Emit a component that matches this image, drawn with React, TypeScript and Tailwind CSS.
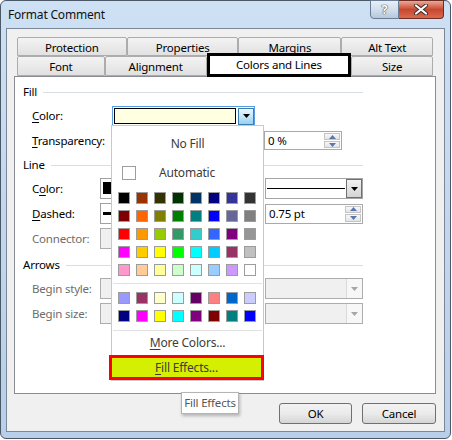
import React from "react";

const standardColors: string[][] = [
  ["#000000", "#993300", "#333300", "#003300", "#003366", "#000080", "#333399", "#333333"],
  ["#800000", "#FF6600", "#808000", "#008000", "#008080", "#0000FF", "#666699", "#808080"],
  ["#FF0000", "#FF9900", "#99CC00", "#339966", "#33CCCC", "#3366FF", "#800080", "#969696"],
  ["#FF00FF", "#FFCC00", "#FFFF00", "#00FF00", "#00FFFF", "#00CCFF", "#993366", "#C0C0C0"],
  ["#FF99CC", "#FFCC99", "#FFFF99", "#CCFFCC", "#CCFFFF", "#99CCFF", "#CC99FF", "#FFFFFF"],
];

const chartColors: string[][] = [
  ["#9999FF", "#993366", "#FFFFCC", "#CCFFFF", "#660066", "#FF8080", "#0066CC", "#CCCCFF"],
  ["#000080", "#FF00FF", "#FFFF00", "#00FFFF", "#800080", "#800000", "#008080", "#0000FF"],
];

function Swatch({ color }: { color: string }) {
  return <div className="h-[12px] w-[12px] border border-[#9c9c9c]" style={{ backgroundColor: color }} />;
}

function SwatchGrid({ rows }: { rows: string[][] }) {
  return (
    <div className="flex flex-col gap-[6px] pl-[6px]">
      {rows.map((row, i) => (
        <div key={i} className="flex gap-[6px]">
          {row.map((c, j) => (
            <Swatch key={j} color={c} />
          ))}
        </div>
      ))}
    </div>
  );
}

function DownArrow({ color = "#000000" }: { color?: string }) {
  return (
    <svg width="7" height="4" viewBox="0 0 7 4">
      <path d="M0 0H7L3.5 4Z" fill={color} />
    </svg>
  );
}

function Spinner() {
  return (
    <div className="flex w-[17px] flex-col gap-[1px] py-[1px] pr-[1px]">
      <div className="flex flex-1 items-center justify-center border border-[#c4c4c4] bg-gradient-to-b from-[#f8f8f8] to-[#e4e4e4]">
        <svg width="7" height="4" viewBox="0 0 7 4">
          <path d="M0 4H7L3.5 0Z" fill="#5b76ad" />
        </svg>
      </div>
      <div className="flex flex-1 items-center justify-center border border-[#c4c4c4] bg-gradient-to-b from-[#f8f8f8] to-[#e4e4e4]">
        <svg width="7" height="4" viewBox="0 0 7 4">
          <path d="M0 0H7L3.5 4Z" fill="#5b76ad" />
        </svg>
      </div>
    </div>
  );
}

function Heading({ label }: { label: string }) {
  return (
    <div className="flex h-[16px] w-[340px] items-center">
      <span className="leading-none">{label}</span>
      <div className="ml-[6px] h-px flex-1 bg-[#d5dfe5]" />
    </div>
  );
}

function BackTab({ label, className }: { label: string; className: string }) {
  return (
    <div
      className={
        "flex h-full items-center justify-center rounded-t-[2px] border border-[#acacac] bg-gradient-to-b from-[#f3f3f3] to-[#e1e1e1] pt-[2px] leading-none " +
        className
      }
    >
      {label}
    </div>
  );
}

function DisabledCombo() {
  return (
    <div className="flex h-[21px] w-[98px] border border-[#adadad] bg-[#f0f0f0]">
      <div className="flex-1" />
      <div className="flex w-[16px] items-center justify-center border-l border-[#d9d9d9] bg-[#f7f7f7]">
        <DownArrow color="#a6a6a6" />
      </div>
    </div>
  );
}

export default function App() {
  return (
    <div className="h-[440px] w-[452px] overflow-hidden whitespace-nowrap bg-white font-['Segoe_UI','Noto_Sans',sans-serif] text-[11.5px] tracking-[-0.2px] text-black">
      <div className="flex h-[439px] w-[451px] flex-col rounded-[6px] border border-[#4a5868] bg-gradient-to-b from-[#cde0f4] via-[#c2d7ef] to-[#b7cfe9]">
        {/* title bar */}
        <div className="flex h-[27px] items-start justify-between pl-[7px] pr-[6px]">
          <div className="self-center pt-[1px] text-[12px] leading-none text-[#111]">Format Comment</div>
          <div className="-mt-px flex">
            <div className="flex h-[19px] w-[29px] items-center justify-center rounded-bl-[4px] border border-[#6b7d94] bg-gradient-to-b from-[#e8eff7] via-[#d2deec] to-[#b7c8dc] text-[13px] font-bold leading-none text-white [text-shadow:0_0_1px_#222,0_0_1px_#222]">
              ?
            </div>
            <div className="flex h-[19px] w-[45px] items-center justify-center rounded-br-[4px] border border-l-0 border-[#6e2d24] bg-gradient-to-b from-[#e9a996] via-[#c84630] to-[#d96a4e]">
              <svg width="16" height="11" viewBox="0 0 16 11">
                <path d="M3 1.5L13 9.5M13 1.5L3 9.5" stroke="#3a2a28" strokeWidth="4" strokeLinecap="round" />
                <path d="M3 1.5L13 9.5M13 1.5L3 9.5" stroke="#ffffff" strokeWidth="2.2" strokeLinecap="round" />
              </svg>
            </div>
          </div>
        </div>

        {/* client area */}
        <div className="mx-[5px] mb-[6px] flex flex-1 flex-col border border-[#7b8794] bg-[#f0f0f0] pl-[7px] pr-[8px] pt-[8px]">
          {/* tab rows */}
          <div className="flex flex-col px-[3px]">
            <div className="flex h-[19px]">
              <BackTab label="Protection" className="w-[110px]" />
              <BackTab label="Properties" className="w-[112px]" />
              <BackTab label="Margins" className="w-[103px]" />
              <BackTab label="Alt Text" className="w-[92px]" />
            </div>
            <div className="flex h-[20px] items-start">
              <BackTab label="Font" className="w-[88px]" />
              <BackTab label="Alignment" className="w-[102px]" />
              <div className="relative z-10 -mt-[3px] flex h-[24px] w-[145px] items-center justify-center border-[3px] border-black bg-white pb-[1px] leading-none">
                Colors and Lines
              </div>
              <BackTab label="Size" className="w-[82px]" />
            </div>
          </div>

          {/* tab page */}
          <div className="relative h-[318px] border border-[#898c95] bg-white pl-[8px] pt-[7px]">
            <Heading label="Fill" />
            <div className="mt-[5px] flex h-[21px] items-center pl-[9px]">
              <div className="w-[80px]">
                <span className="underline underline-offset-[2px]">C</span>olor:
              </div>
              <div className="flex h-[20px] w-[143px] border border-[#569de5] bg-white p-[1px] pr-0">
                <div className="flex-1 border border-black bg-[#ffffe1]" />
                <div className="-mb-px ml-[2px] flex w-[16px] items-center justify-center border border-[#3c7fb1] bg-gradient-to-b from-[#eaf6fd] via-[#c4e5f8] to-[#98d0f1]">
                  <DownArrow />
                </div>
              </div>
            </div>
            <div className="mt-[4px] flex h-[21px] items-center pl-[9px]">
              <div className="w-[232px]">
                <span className="underline underline-offset-[2px]">T</span>ransparency:
              </div>
              <div className="flex h-[19px] w-[78px] border border-[#a9a9a9] bg-white">
                <div className="flex flex-1 items-center pl-[3px] leading-none">0 %</div>
                <Spinner />
              </div>
            </div>

            <div className="mt-[6px]">
              <Heading label="Line" />
            </div>
            <div className="mt-[5px] flex h-[21px] items-center pl-[9px]">
              <div className="w-[68px]">
                C<span className="underline underline-offset-[2px]">o</span>lor:
              </div>
              <div className="w-[165px]">
                <div className="h-[21px] w-[60px] border border-[#a0a0a0] bg-white px-[2px] pb-[4px] pt-[3px]">
                  <div className="h-full w-[40px] bg-black" />
                </div>
              </div>
              <div className="flex h-[21px] w-[98px] border border-[#a5a5a5] bg-white">
                <div className="flex flex-1 items-center px-[1px]">
                  <div className="h-px w-full bg-black" />
                </div>
                <div className="flex w-[16px] items-center justify-center border border-[#707070] bg-gradient-to-b from-[#f2f2f2] to-[#d4d4d4]">
                  <DownArrow />
                </div>
              </div>
            </div>
            <div className="mt-[4px] flex h-[21px] items-center pl-[9px]">
              <div className="w-[68px]">
                <span className="underline underline-offset-[2px]">D</span>ashed:
              </div>
              <div className="w-[165px]">
                <div className="flex h-[21px] w-[60px] items-center border border-[#a0a0a0] bg-white px-[2px]">
                  <div className="h-[3px] w-[40px] bg-black" />
                </div>
              </div>
              <div className="flex h-[20px] w-[98px] border border-[#a9a9a9] bg-white">
                <div className="flex flex-1 items-center pl-[3px] leading-none">0.75 pt</div>
                <Spinner />
              </div>
            </div>
            <div className="mt-[4px] flex h-[21px] items-center pl-[9px]">
              <div className="w-[68px] text-[#6d6d6d]">Connector:</div>
              <div className="h-[21px] w-[60px] border border-[#adadad] bg-[#f0f0f0]" />
            </div>

            <div className="mt-[8px]">
              <Heading label="Arrows" />
            </div>
            <div className="mt-[5px] flex h-[21px] items-center pl-[9px]">
              <div className="w-[68px] text-[#6d6d6d]">Begin style:</div>
              <div className="w-[165px]">
                <div className="h-[21px] w-[60px] border border-[#adadad] bg-[#f0f0f0]" />
              </div>
              <DisabledCombo />
            </div>
            <div className="mt-[4px] flex h-[21px] items-center pl-[9px]">
              <div className="w-[68px] text-[#6d6d6d]">Begin size:</div>
              <div className="w-[165px]">
                <div className="h-[21px] w-[60px] border border-[#adadad] bg-[#f0f0f0]" />
              </div>
              <DisabledCombo />
            </div>

            {/* colour picker drop-down */}
            <div className="absolute left-[96px] top-[48px] z-10 flex h-[256px] w-[153px] flex-col border border-[#c9c9c9] bg-white text-[#3c3c3c]">
              <div className="flex h-[36px] items-center justify-center text-[12px] leading-none">No Fill</div>
              <div className="flex h-[23px] items-center pl-[10px]">
                <div className="h-[14px] w-[14px] border border-[#9c9c9c] bg-white" />
                <span className="ml-[23px] text-[12px] leading-none">Automatic</span>
              </div>
              <div className="mt-[8px]">
                <SwatchGrid rows={standardColors} />
              </div>
              <div className="mx-[1px] mt-[7px] h-px bg-[#e2e2e2]" />
              <div className="mt-[8px]">
                <SwatchGrid rows={chartColors} />
              </div>
              <div className="mx-[1px] mt-[8px] h-px bg-[#e2e2e2]" />
              <div className="flex h-[24px] items-center justify-center text-[12px] leading-none">
                <span className="underline underline-offset-[2px]">M</span>ore Colors...
              </div>
              <div className="-ml-[3px] -mr-px flex h-[25px] items-center justify-center border-[3px] border-[#ff0000] bg-[#d4ef00] text-[12px] leading-none">
                <span className="underline underline-offset-[2px]">F</span>ill Effects...
              </div>
            </div>

            {/* tooltip */}
            <div className="absolute left-[166px] top-[315px] z-20 flex h-[22px] w-[58px] items-center justify-center border border-[#b4b4b4] bg-white leading-none text-[#575757] shadow-[1px_2px_3px_rgba(0,0,0,0.25)]">
              Fill Effects
            </div>
          </div>

          {/* dialog buttons */}
          <div className="mt-[9px] flex justify-end gap-[10px]">
            <div className="flex h-[21px] w-[73px] items-center justify-center rounded-[3px] border border-[#707070] bg-gradient-to-b from-[#f2f2f2] via-[#ebebeb] to-[#d5d5d5] leading-none">
              OK
            </div>
            <div className="flex h-[21px] w-[74px] items-center justify-center rounded-[3px] border border-[#707070] bg-gradient-to-b from-[#f2f2f2] via-[#ebebeb] to-[#d5d5d5] leading-none">
              Cancel
            </div>
          </div>
        </div>
      </div>
    </div>
  );
}
